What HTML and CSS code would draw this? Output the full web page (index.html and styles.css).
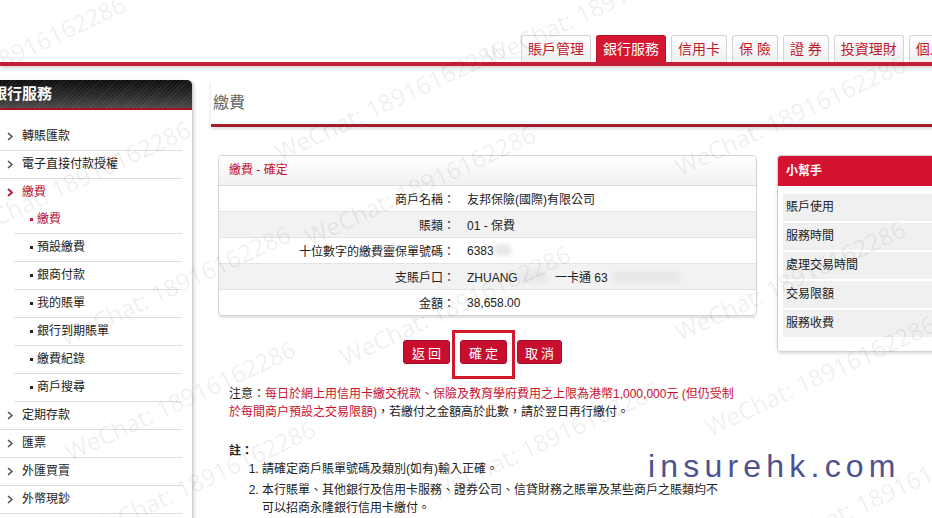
FILE: index.html
```html
<!DOCTYPE html>
<html lang="zh-Hant">
<head>
  <meta charset="UTF-8" />
  <meta name="viewport" content="width=device-width, initial-scale=1.0" />
  <title>繳費 - 確定</title>
  <link rel="stylesheet" href="styles.css">
</head>
<body>
  <div class="page">
    <header class="topbar">
      <nav class="tabs">
        <a class="tab">賬戶管理</a>
        <a class="tab active">銀行服務</a>
        <a class="tab">信用卡</a>
        <a class="tab">保&nbsp;險</a>
        <a class="tab">證&nbsp;券</a>
        <a class="tab">投資理財</a>
        <a class="tab">個人設定</a>
      </nav>
    </header>

    <div class="layout">
      <aside class="sidebar">
        <div class="side-title">銀行服務</div>
        <ul class="side-menu">
          <li class="side-item"><svg class="chev" viewBox="0 0 6 9"><path d="M1 1l4 3.5L1 8"/></svg>轉賬匯款</li>
          <li class="side-item"><svg class="chev" viewBox="0 0 6 9"><path d="M1 1l4 3.5L1 8"/></svg>電子直接付款授權</li>
          <li class="side-item open"><svg class="chev" viewBox="0 0 6 9"><path d="M1 1l4 3.5L1 8"/></svg>繳費</li>
          <li class="sub-item current">繳費</li>
          <li class="sub-item">預設繳費</li>
          <li class="sub-item">銀商付款</li>
          <li class="sub-item">我的賬單</li>
          <li class="sub-item">銀行到期賬單</li>
          <li class="sub-item">繳費紀錄</li>
          <li class="sub-item">商戶搜尋</li>
          <li class="side-item"><svg class="chev" viewBox="0 0 6 9"><path d="M1 1l4 3.5L1 8"/></svg>定期存款</li>
          <li class="side-item"><svg class="chev" viewBox="0 0 6 9"><path d="M1 1l4 3.5L1 8"/></svg>匯票</li>
          <li class="side-item"><svg class="chev" viewBox="0 0 6 9"><path d="M1 1l4 3.5L1 8"/></svg>外匯買賣</li>
          <li class="side-item"><svg class="chev" viewBox="0 0 6 9"><path d="M1 1l4 3.5L1 8"/></svg>外幣現鈔</li>
        </ul>
      </aside>

      <main class="main">
        <h1 class="page-title">繳費</h1>
        <div class="main-body">
          <section class="content">
            <div class="panel">
              <div class="panel-head">繳費 - 確定</div>
              <table class="confirm">
                <tr><td class="label">商戶名稱：</td><td>友邦保險(國際)有限公司</td></tr>
                <tr><td class="label">賬類：</td><td>01 - 保費</td></tr>
                <tr><td class="label">十位數字的繳費靈保單號碼：</td><td>6383<span class="blur short"></span></td></tr>
                <tr><td class="label">支賬戶口：</td><td>ZHUANG<span class="blur mid"></span> 一卡通 63<span class="blur long"></span></td></tr>
                <tr><td class="label">金額：</td><td>38,658.00</td></tr>
              </table>
            </div>

            <div class="actions">
              <button class="btn">返回</button>
              <span class="marked"><button class="btn">確定</button></span>
              <button class="btn narrow">取消</button>
            </div>

            <p class="notice">注意：<span class="red">每日於網上用信用卡繳交稅款、保險及教育學府費用之上限為港幣1,000,000元 (但仍受制於每間商户預設之交易限額)</span>，若繳付之金額高於此數，請於翌日再行繳付。</p>

            <div class="remarks">
              <div class="remarks-title">註：</div>
              <ol>
                <li>請確定商戶賬單號碼及類別(如有)輸入正確。</li>
                <li>本行賬單、其他銀行及信用卡服務、證券公司、信貸財務之賬單及某些商戶之賬類均不可以招商永隆銀行信用卡繳付。</li>
              </ol>
            </div>
          </section>

          <aside class="helper">
            <div class="helper-head">小幫手</div>
            <ul class="helper-list">
              <li>賬戶使用</li>
              <li>服務時間</li>
              <li>處理交易時間</li>
              <li>交易限額</li>
              <li>服務收費</li>
            </ul>
          </aside>
        </div>
      </main>
    </div>

    <div class="watermarks">
      <span class="wm w1">WeChat: 18916162286</span>
      <span class="wm w2">WeChat: 18916162286</span>
      <span class="wm w3">WeChat: 18916162286</span>
      <span class="wm w4">WeChat: 18916162286</span>
      <span class="wm w5">WeChat: 18916162286</span>
      <span class="wm w6">WeChat: 18916162286</span>
      <span class="wm w7">WeChat: 18916162286</span>
      <span class="wm w8">WeChat: 18916162286</span>
      <span class="wm w9">WeChat: 18916162286</span>
      <span class="wm w10">WeChat: 18916162286</span>
      <span class="wm w11">WeChat: 18916162286</span>
      <span class="wm w12">WeChat: 18916162286</span>
      <span class="wm w13">WeChat: 18916162286</span>
      <span class="wm w14">WeChat: 18916162286</span>
    </div>
    <div class="brand">insurehk.com</div>
  </div>
</body>
</html>
```

FILE: styles.css
```css
body {
  margin: 0;
  overflow: hidden;
  background: #fff;
  font-family: "Liberation Sans", "Noto Sans CJK TC", sans-serif;
  font-size: 12px;
  color: #222;
}
.page {
  position: relative;
  width: 990px;
  height: 518px;
  overflow: hidden;
}

/* top tabs */
.topbar {
  height: 62px;
  border-bottom: 4px solid #c4203a;
  box-shadow: 0 2px 4px rgba(0,0,0,0.18);
  display: flex;
  align-items: flex-end;
  padding-left: 521px;
}
.tabs {
  display: flex;
  gap: 5px;
  white-space: nowrap;
}
.tab {
  height: 26px;
  line-height: 26px;
  padding: 0 6px;
  font-size: 14px;
  color: #c0172d;
  background: linear-gradient(#fff, #f0f0f0);
  border: 1px solid #d4d4d4;
  border-bottom: none;
  border-radius: 3px 3px 0 0;
}
.tab.active {
  background: #d51631;
  border-color: #c0122b;
  color: #fff;
}

.layout {
  display: flex;
  align-items: flex-start;
  margin-top: 14px;
}

/* side menu */
.sidebar {
  width: 202px;
  margin-left: -10px;
  background: #fff;
  border-right: 1px solid #cfcfcf;
  box-shadow: 2px 1px 3px rgba(0,0,0,0.12);
  border-radius: 0 5px 0 0;
}
.side-title {
  height: 28px;
  line-height: 28px;
  padding-left: 2px;
  font-size: 15px;
  font-weight: bold;
  color: #fff;
  border-bottom: 2px solid #a5141f;
  border-radius: 0 5px 0 0;
  background:
    repeating-linear-gradient(-45deg, rgba(255,255,255,0.07) 0 1px, transparent 1px 3px),
    linear-gradient(#0e0e0e, #2a2a2a 55%, #4a4a4a);
}
.side-menu {
  list-style: none;
  margin: 0;
  padding: 13px 10px 8px 0;
}
.side-item,
.sub-item {
  height: 27px;
  line-height: 27px;
  border-bottom: 1px solid #dedede;
  color: #222;
  white-space: nowrap;
}
.side-item {
  padding-left: 17px;
  display: flex;
  align-items: center;
}
.chev {
  width: 6px;
  height: 9px;
  margin-right: 9px;
  fill: none;
  stroke: #444;
  stroke-width: 1.4;
}
.side-item.open {
  color: #b8203a;
  border-bottom: none;
}
.side-item.open .chev {
  stroke: #b8203a;
  stroke-width: 2;
}
.sub-item {
  margin-left: 24px;
  padding-left: 16px;
  display: flex;
  align-items: center;
}
.sub-item::before {
  content: "";
  width: 3px;
  height: 3px;
  margin-right: 4px;
  background: #222;
}
.sub-item.current {
  color: #b8203a;
}
.sub-item.current::before {
  background: #b8203a;
}

/* main */
.main {
  flex: 1;
  margin-left: 18px;
}
.page-title {
  margin: 0;
  padding: 14px 0 12px 2px;
  line-height: 18px;
  font-size: 16px;
  font-weight: normal;
  color: #666;
  border-bottom: 3px solid #a51d2c;
  box-shadow: 0 2px 3px rgba(0,0,0,0.15);
}
.main-body {
  display: flex;
  align-items: flex-start;
  gap: 20px;
  padding: 28px 0 0 7px;
}
.content {
  width: 539px;
}
.panel {
  border: 1px solid #d4d4d4;
  border-radius: 4px;
  box-shadow: 0 3px 2px -1px rgba(0,0,0,0.12);
  overflow: hidden;
}
.panel-head {
  height: 29px;
  line-height: 29px;
  padding-left: 10px;
  color: #c8102e;
  background: linear-gradient(#fff, #f1f1f1);
  border-bottom: 1px solid #dadada;
}
.confirm {
  width: 100%;
  border-collapse: collapse;
}
.confirm td {
  height: 25px;
  padding: 0;
  border-top: 1px solid #e4e4e4;
  color: #222;
}
.confirm tr:first-child td {
  border-top: none;
}
.confirm tr:nth-child(even) td {
  background: #f2f2f2;
}
.confirm td.label {
  width: 236px;
  text-align: right;
}
.confirm td + td {
  padding-left: 12px;
}
.blur {
  display: inline-block;
  height: 12px;
  vertical-align: -1px;
  background: #e8e8e8;
  border-radius: 6px;
  filter: blur(2px);
}
.blur.short { width: 18px; }
.blur.mid { width: 30px; margin-right: 4px; }
.blur.long { width: 70px; margin-left: 4px; }

.actions {
  display: flex;
  justify-content: center;
  gap: 10px;
  margin-top: 24px;
  padding-right: 10px;
}
.btn {
  height: 24px;
  padding: 0 5px 0 8px;
  font-family: "Liberation Sans", "Noto Sans CJK TC", sans-serif;
  font-size: 13px;
  letter-spacing: 3px;
  color: #fff;
  background: #c8102e;
  border: 1px solid #a80d25;
  border-radius: 3px;
  cursor: pointer;
}
.btn.narrow {
  padding: 0 4px 0 7px;
}
.marked {
  position: relative;
  display: flex;
}
.marked::after {
  content: "";
  position: absolute;
  top: -10px;
  bottom: -15px;
  left: -8px;
  right: -8px;
  border: 3px solid #d3172d;
}

.notice {
  width: 512px;
  margin: 21px 0 0;
  padding-left: 11px;
  line-height: 18px;
}
.red {
  color: #c8102e;
}
.remarks {
  margin-top: 21px;
  padding-left: 11px;
  line-height: 18px;
}
.remarks-title {
  font-weight: bold;
}
.remarks ol {
  width: 462px;
  margin: 0;
  padding-left: 33px;
}
.remarks li {
  margin-bottom: 3px;
}

/* helper box */
.helper {
  width: 180px;
  border: 1px solid #d2d2d2;
  border-radius: 4px;
  box-shadow: 0 2px 3px rgba(0,0,0,0.12);
  overflow: hidden;
}
.helper-head {
  height: 30px;
  line-height: 30px;
  padding-left: 8px;
  font-weight: bold;
  color: #fff;
  background: #d3132f;
}
.helper-list {
  list-style: none;
  margin: 0;
  padding: 8px 0 12px 5px;
}
.helper-list li {
  height: 27px;
  line-height: 27px;
  margin-bottom: 2px;
  padding-left: 3px;
  background: #f0f0f0;
  color: #222;
}

/* overlays */
.watermarks {
  position: absolute;
  inset: 0;
  pointer-events: none;
}
.wm {
  position: absolute;
  font-family: "Open Sans", sans-serif;
  font-size: 24px;
  color: rgba(0,0,0,0.08);
  white-space: nowrap;
  transform: translate(-50%, -50%) rotate(-25deg);
}
.w1 { left: 10px; top: 55px; }
.w2 { left: 600px; top: 5px; }
.w3 { left: 390px; top: 100px; }
.w4 { left: 790px; top: 115px; }
.w5 { left: 420px; top: 185px; }
.w6 { left: 75px; top: 180px; }
.w7 { left: 175px; top: 285px; }
.w8 { left: 790px; top: 280px; }
.w9 { left: 455px; top: 305px; }
.w10 { left: 180px; top: 400px; }
.w11 { left: 820px; top: 375px; }
.w12 { left: 545px; top: 440px; }
.w13 { left: 200px; top: 480px; }
.w14 { left: 880px; top: 495px; }

.brand {
  position: absolute;
  left: 648px;
  top: 450px;
  font-family: "Liberation Sans", sans-serif;
  font-size: 32px;
  line-height: 32px;
  letter-spacing: 5.2px;
  color: #4d5290;
}
```
